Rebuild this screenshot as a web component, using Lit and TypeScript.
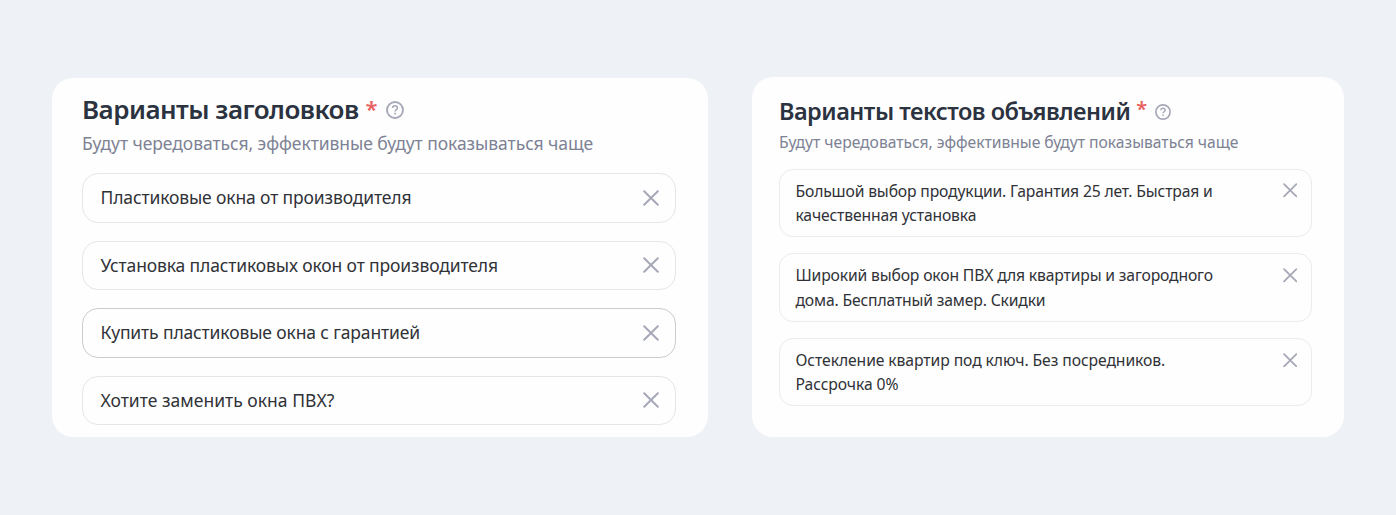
import { LitElement, html, css } from 'lit';
import { customElement, property } from 'lit/decorators.js';
import { classMap } from 'lit/directives/class-map.js';

interface Variant {
  lines: string[];
  active?: boolean;
  loose?: boolean;
}

const HEADLINES: Variant[] = [
  { lines: ['Пластиковые окна от производителя'] },
  { lines: ['Установка пластиковых окон от производителя'] },
  { lines: ['Купить пластиковые окна с гарантией'], active: true },
  { lines: ['Хотите заменить окна ПВХ?'], loose: true },
];

const TEXTS: Variant[] = [
  { lines: ['Большой выбор продукции. Гарантия 25 лет. Быстрая и', 'качественная установка'] },
  { lines: ['Широкий выбор окон ПВХ для квартиры и загородного', 'дома. Бесплатный замер. Скидки'] },
  { lines: ['Остекление квартир под ключ. Без посредников.', 'Рассрочка 0%'], loose: true },
];

@customElement('variants-card')
export class VariantsCard extends LitElement {
  @property() heading = '';
  @property() hint = '';
  @property({ attribute: false }) items: Variant[] = [];

  static styles = css`
    :host {
      display: flex;
      flex-direction: column;
      box-sizing: border-box;
      background: #fefefe;
      border-radius: 21px;
      white-space: nowrap;
    }
    .title {
      display: flex;
      align-items: center;
      margin: 0;
      height: 36px;
      line-height: 36px;
      font-size: var(--title-size);
      font-weight: 600;
      letter-spacing: var(--title-spacing);
      color: #2b3240;
    }
    .label {
      padding-bottom: var(--label-lift);
    }
    .star {
      margin-left: var(--star-gap);
      padding-bottom: 4px;
      color: #e8605f;
      font-size: var(--star-size);
      font-weight: 600;
      letter-spacing: 0;
    }
    .help {
      width: var(--help-size);
      height: var(--help-size);
      margin: var(--help-drop) 0 0 var(--help-gap);
      flex: none;
    }
    .hint {
      margin: var(--hint-top) 0 0;
      height: 24px;
      line-height: 24px;
      font-size: var(--hint-size);
      letter-spacing: var(--hint-spacing);
      color: #7d8294;
    }
    .list {
      display: flex;
      flex-direction: column;
      gap: var(--list-gap);
      margin-top: var(--list-top);
    }
    .item {
      display: flex;
      justify-content: space-between;
      align-items: flex-start;
      box-sizing: border-box;
      height: var(--item-height);
      padding: var(--item-padding);
      border: 1px solid var(--item-border);
      border-radius: var(--item-radius);
      font-size: var(--text-size);
      line-height: var(--text-line);
      letter-spacing: var(--text-spacing);
      color: #303237;
    }
    .item.active {
      border-color: #cbccd1;
    }
    .item.loose {
      letter-spacing: var(--text-spacing-loose);
    }
    .line {
      display: block;
    }
    .remove {
      display: flex;
      align-items: center;
      height: var(--text-line);
      padding: 0;
      border: none;
      background: none;
    }
    .cross {
      width: var(--cross-size);
      height: var(--cross-size);
    }
  `;

  render() {
    return html`
      <h2 class="title">
        <span class="label">${this.heading}</span><span class="star">*</span>
        <svg class="help" viewBox="0 0 18 18" fill="none" stroke="#a7a9b8">
          <circle cx="9" cy="9" r="8" stroke-width="1.9" />
          <path d="M6.6 7.1C6.6 5.6 7.6 4.8 9 4.8s2.4.8 2.4 2.1c0 1.7-2.3 1.7-2.3 3.6" stroke-width="1.6" />
          <path d="M9.1 11.7v1.7" stroke-width="1.7" />
        </svg>
      </h2>
      <p class="hint">${this.hint}</p>
      <div class="list">
        ${this.items.map(
          (item) => html`
            <div class=${classMap({ item: true, active: !!item.active, loose: !!item.loose })}>
              <div>${item.lines.map((line) => html`<span class="line">${line}</span>`)}</div>
              <button class="remove" aria-label="Удалить">
                <svg class="cross" viewBox="0 0 16 16" fill="none" stroke="#a6a8b7" stroke-width="2">
                  <path d="M1.2 1.2l13.6 13.6M14.8 1.2L1.2 14.8" stroke-linecap="round" />
                </svg>
              </button>
            </div>
          `
        )}
      </div>
    `;
  }
}

@customElement('app-root')
export class AppRoot extends LitElement {
  static styles = css`
    :host {
      display: flex;
      align-items: flex-start;
      gap: 44px;
      box-sizing: border-box;
      width: 100%;
      height: 515px;
      padding: 77px 52px 0;
      background: #eef1f6;
      font-family: 'Noto Sans', 'Open Sans', sans-serif;
    }
    .headlines {
      width: 656px;
      height: 359px;
      margin-top: 1px;
      padding: 14px 32px 0 30px;
      --title-size: 26px;
      --title-spacing: -0.52px;
      --label-lift: 2px;
      --star-gap: 7px;
      --star-size: 22px;
      --help-size: 18px;
      --help-gap: 8px;
      --help-drop: 0;
      --hint-top: 3px;
      --hint-size: 17.5px;
      --hint-spacing: -0.06px;
      --list-top: 18px;
      --list-gap: 18.1px;
      --item-height: 49.5px;
      --item-border: #e6e6ea;
      --item-padding: 11px 16px 0 17.5px;
      --item-radius: 16px;
      --text-size: 17.5px;
      --text-line: 25px;
      --text-spacing: -0.135px;
      --text-spacing-loose: 0.02px;
      --cross-size: 16px;
    }
    .texts {
      width: 592px;
      height: 360px;
      padding: 16px 32px 0 27px;
      --title-size: 23.5px;
      --title-spacing: -0.5px;
      --label-lift: 0;
      --star-gap: 6px;
      --star-size: 20px;
      --help-size: 16px;
      --help-gap: 7.5px;
      --help-drop: 2px;
      --hint-top: 1px;
      --hint-size: 15.7px;
      --hint-spacing: -0.035px;
      --list-top: 14.5px;
      --list-gap: 16.2px;
      --item-height: 68.5px;
      --item-border: #ebebee;
      --item-padding: 9px 14px 0 15.5px;
      --item-radius: 14px;
      --text-size: 15.7px;
      --text-line: 24.4px;
      --text-spacing: -0.15px;
      --text-spacing-loose: -0.08px;
      --cross-size: 14.5px;
    }
  `;

  render() {
    const hint = 'Будут чередоваться, эффективные будут показываться чаще';
    return html`
      <variants-card class="headlines" heading="Варианты заголовков" hint=${hint} .items=${HEADLINES}></variants-card>
      <variants-card class="texts" heading="Варианты текстов объявлений" hint=${hint} .items=${TEXTS}></variants-card>
    `;
  }
}
